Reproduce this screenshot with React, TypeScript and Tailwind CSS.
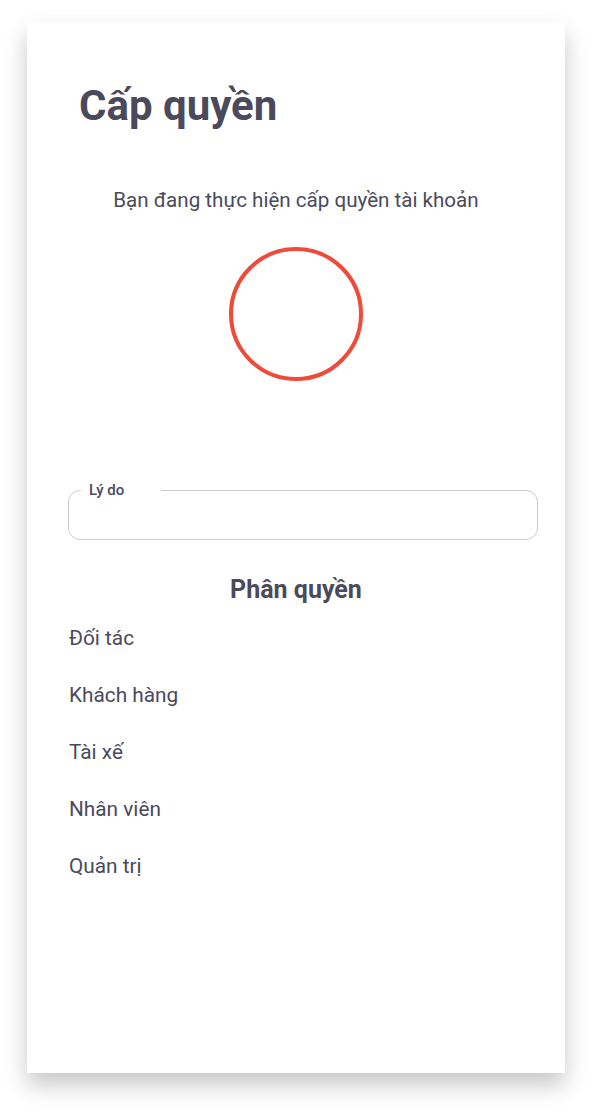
import React from 'react';

const roles = ['Đối tác', 'Khách hàng', 'Tài xế', 'Nhân viên', 'Quản trị'];

const App: React.FC = () => {
  return (
    <div className="min-h-[1113px] bg-white pt-[22px] pl-[27px] font-['Roboto',sans-serif] text-[#4a4a5c]">
      <div className="w-[538px] h-[1051px] bg-white shadow-[0_12px_22px_rgba(0,0,0,0.22)] flex flex-col px-[41px]">
        <h1 className="mt-[57px] ml-[11px] text-[42px] leading-[54px] font-bold">Cấp quyền</h1>

        <p className="mt-[53px] text-center text-[20.6px] leading-[28px]">
          Bạn đang thực hiện cấp quyền tài khoản
        </p>

        <div className="mt-[33px] flex justify-center">
          <div className="w-[134px] h-[134px] rounded-full border-4 border-[#ef4a3a]" />
        </div>

        <fieldset className="mt-[100px] w-[470px] h-[59px] rounded-xl border border-[#cccccc] px-[12px]">
          <legend className="w-[80px] px-[8px] text-[15px] leading-[18px] font-medium">Lý do</legend>
        </fieldset>

        <h2 className="mt-[35px] text-center text-[25px] leading-[30px] font-bold">Phân quyền</h2>

        <ul className="mt-[19px] flex flex-col">
          {roles.map((role) => (
            <li key={role} className="h-[57px] pl-[1px] text-[20.8px] leading-[28px]">
              {role}
            </li>
          ))}
        </ul>
      </div>
    </div>
  );
};

export default App;
